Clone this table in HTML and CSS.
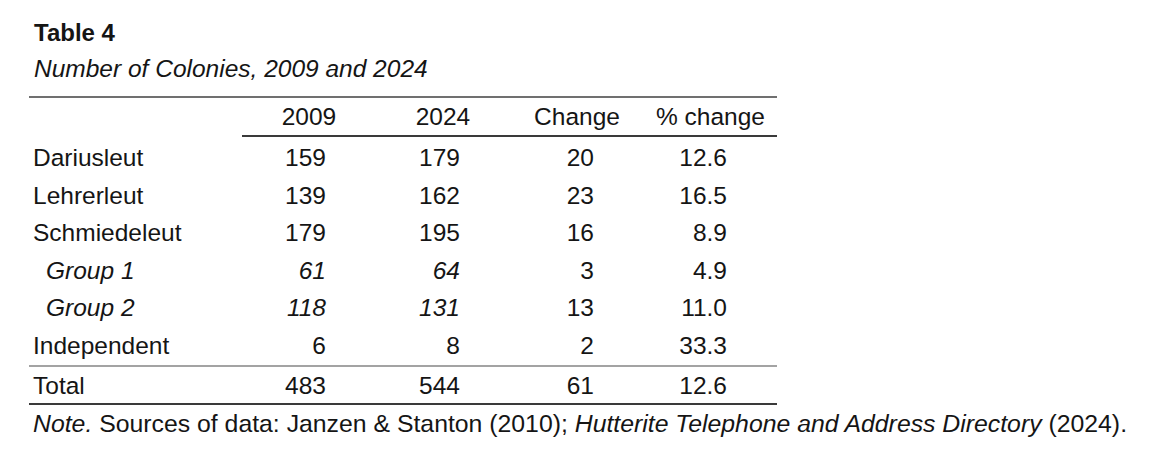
FILE: index.html
```html
<!DOCTYPE html>
<html lang="en">
<head>
<meta charset="utf-8">
<title>Table 4</title>
<link rel="stylesheet" href="styles.css">
</head>
<body>
<div class="page">
  <p class="title">Table 4</p>
  <p class="subtitle">Number of Colonies, 2009 and 2024</p>
  <table class="data">
    <colgroup>
      <col class="c-label">
      <col class="c-num">
      <col class="c-num">
      <col class="c-num">
      <col class="c-last">
    </colgroup>
    <thead>
      <tr class="head">
        <th class="label"></th>
        <th class="col">2009</th>
        <th class="col">2024</th>
        <th class="col">Change</th>
        <th class="col">% change</th>
      </tr>
    </thead>
    <tbody>
      <tr class="row first">
        <td class="label">Dariusleut</td><td class="num">159</td><td class="num">179</td><td class="num">20</td><td class="num">12.6</td>
      </tr>
      <tr class="row">
        <td class="label">Lehrerleut</td><td class="num">139</td><td class="num">162</td><td class="num">23</td><td class="num">16.5</td>
      </tr>
      <tr class="row">
        <td class="label">Schmiedeleut</td><td class="num">179</td><td class="num">195</td><td class="num">16</td><td class="num">8.9</td>
      </tr>
      <tr class="row sub">
        <td class="label">Group 1</td><td class="num it">61</td><td class="num it">64</td><td class="num">3</td><td class="num">4.9</td>
      </tr>
      <tr class="row sub">
        <td class="label">Group 2</td><td class="num it">118</td><td class="num it">131</td><td class="num">13</td><td class="num">11.0</td>
      </tr>
      <tr class="row">
        <td class="label">Independent</td><td class="num">6</td><td class="num">8</td><td class="num">2</td><td class="num">33.3</td>
      </tr>
      <tr class="total">
        <td class="label">Total</td><td class="num">483</td><td class="num">544</td><td class="num">61</td><td class="num">12.6</td>
      </tr>
    </tbody>
  </table>
  <p class="note"><em>Note.</em> Sources of data: Janzen &amp; Stanton (2010); <em>Hutterite Telephone and Address Directory</em> (2024).</p>
</div>
</body>
</html>
```

FILE: styles.css
```css
html, body {
  margin: 0;
  background: #ffffff;
}

body {
  color: #151515;
  font-family: "Liberation Sans", Arial, sans-serif;
  font-size: 24.5px;
}

.page {
  padding: 15px 0 0 29px;
}

.title {
  margin: 0;
  padding-left: 5px;
  font-weight: bold;
  font-size: 24px;
  line-height: 36px;
}

.subtitle {
  margin: 0;
  padding-left: 5px;
  font-style: italic;
  line-height: 36px;
}

.data {
  margin-top: 9px;
  width: 748px;
  table-layout: fixed;
  border-collapse: separate;
  border-spacing: 0;
}

.c-label { width: 213px; }
.c-num { width: 134px; }
.c-last { width: 133px; }

.data th,
.data td {
  padding: 0;
  white-space: nowrap;
}

.head th {
  border-top: 2px solid #707070;
  font-weight: normal;
  line-height: 36px;
  padding-top: 1px;
}

.head th.col {
  text-align: center;
  border-bottom: 2px solid #3a3a3a;
}

.head th.label {
  padding-bottom: 2px;
}

.row td {
  line-height: 37.6px;
}

.row.first td {
  padding-top: 2px;
}

.label {
  text-align: left;
  padding-left: 4px !important;
}

.sub .label {
  padding-left: 17px !important;
  font-style: italic;
}

.num {
  text-align: right;
  padding-right: 50px !important;
}

.it {
  font-style: italic;
}

.total td {
  border-top: 2px solid #a3a3a3;
  border-bottom: 2px solid #3a3a3a;
  line-height: 34px;
  padding-top: 2px;
}

.note {
  margin: 1px 0 0;
  padding-left: 4px;
  font-size: 24.8px;
  line-height: 36px;
  white-space: nowrap;
}

.note em {
  font-style: italic;
}
```
